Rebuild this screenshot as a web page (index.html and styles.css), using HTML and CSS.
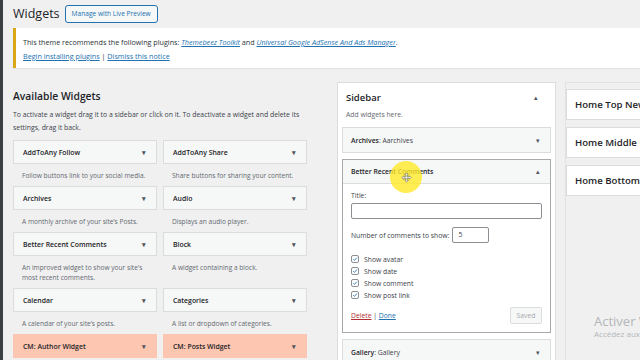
FILE: index.html
```html
<!DOCTYPE html>
<html lang="en">
<head>
  <meta charset="UTF-8">
  <title>Widgets</title>
  <link rel="stylesheet" href="styles.css">
</head>
<body>
<div class="page">
  <div class="header">
    <h1>Widgets</h1>
    <a class="preview-btn" href="#">Manage with Live Preview</a>
  </div>

  <div class="notice">
    <p>This theme recommends the following plugins: <a href="#"><em>Themebeez Toolkit</em></a> and <a href="#"><em>Universal Google AdSense And Ads Manager</em></a>.</p>
    <p><a href="#">Begin installing plugins</a> | <a href="#">Dismiss this notice</a></p>
  </div>

  <div class="main">
    <div class="available">
      <h2>Available Widgets</h2>
      <p class="intro">To activate a widget drag it to a sidebar or click on it. To deactivate a widget and delete its settings, drag it back.</p>
      <div class="widget-grid">
        <div class="widget">
          <div class="widget-top"><span>AddToAny Follow</span><span class="arrow">▾</span></div>
          <div class="widget-desc">Follow buttons link to your social media.</div>
        </div>
        <div class="widget">
          <div class="widget-top"><span>AddToAny Share</span><span class="arrow">▾</span></div>
          <div class="widget-desc">Share buttons for sharing your content.</div>
        </div>
        <div class="widget">
          <div class="widget-top"><span>Archives</span><span class="arrow">▾</span></div>
          <div class="widget-desc">A monthly archive of your site’s Posts.</div>
        </div>
        <div class="widget">
          <div class="widget-top"><span>Audio</span><span class="arrow">▾</span></div>
          <div class="widget-desc">Displays an audio player.</div>
        </div>
        <div class="widget">
          <div class="widget-top"><span>Better Recent Comments</span><span class="arrow">▾</span></div>
          <div class="widget-desc">An improved widget to show your site's<br>most recent comments.</div>
        </div>
        <div class="widget">
          <div class="widget-top"><span>Block</span><span class="arrow">▾</span></div>
          <div class="widget-desc">A widget containing a block.</div>
        </div>
        <div class="widget">
          <div class="widget-top"><span>Calendar</span><span class="arrow">▾</span></div>
          <div class="widget-desc">A calendar of your site’s posts.</div>
        </div>
        <div class="widget">
          <div class="widget-top"><span>Categories</span><span class="arrow">▾</span></div>
          <div class="widget-desc">A list or dropdown of categories.</div>
        </div>
        <div class="widget highlight">
          <div class="widget-top"><span>CM: Author Widget</span><span class="arrow">▾</span></div>
        </div>
        <div class="widget highlight">
          <div class="widget-top"><span>CM: Posts Widget</span><span class="arrow">▾</span></div>
        </div>
      </div>
    </div>

    <div class="sidebar">
      <div class="sidebar-head">
        <h2>Sidebar</h2>
        <span class="arrow">▴</span>
      </div>
      <p class="sidebar-desc">Add widgets here.</p>
      <div class="sidebar-widgets">
        <div class="s-widget">
          <div class="s-widget-top"><span><b>Archives</b>: Aarchives</span><span class="arrow">▾</span></div>
        </div>
        <div class="s-widget open">
          <div class="s-widget-top"><span><b>Better Recent Comments</b></span><span class="arrow">▴</span></div>
          <div class="s-widget-form">
            <label class="field-label">Title:</label>
            <div class="text-input wide"></div>
            <div class="num-row">
              <span>Number of comments to show:</span>
              <div class="text-input num">5</div>
            </div>
            <ul class="checks">
              <li><span class="box"><svg viewBox="0 0 10 10"><path d="M2 5.2 L4.2 7.4 L8.2 2.6" fill="none" stroke="#2271b1" stroke-width="1.4"/></svg></span>Show avatar</li>
              <li><span class="box"><svg viewBox="0 0 10 10"><path d="M2 5.2 L4.2 7.4 L8.2 2.6" fill="none" stroke="#2271b1" stroke-width="1.4"/></svg></span>Show date</li>
              <li><span class="box"><svg viewBox="0 0 10 10"><path d="M2 5.2 L4.2 7.4 L8.2 2.6" fill="none" stroke="#2271b1" stroke-width="1.4"/></svg></span>Show comment</li>
              <li><span class="box"><svg viewBox="0 0 10 10"><path d="M2 5.2 L4.2 7.4 L8.2 2.6" fill="none" stroke="#2271b1" stroke-width="1.4"/></svg></span>Show post link</li>
            </ul>
            <div class="form-actions">
              <span><a class="delete" href="#">Delete</a> | <a href="#">Done</a></span>
              <span class="saved-btn">Saved</span>
            </div>
          </div>
        </div>
        <div class="s-widget">
          <div class="s-widget-top"><span><b>Gallery</b>: Gallery</span><span class="arrow">▾</span></div>
        </div>
      </div>
    </div>

    <div class="areas">
      <div class="area">Home Top News</div>
      <div class="area">Home Middle News</div>
      <div class="area">Home Bottom News</div>
    </div>
  </div>
</div>

<!-- recording highlight around the mouse pointer -->
<div class="cursor-dot">
  <svg class="move-cursor" viewBox="0 0 12 12"><path d="M6 1 L8 3 H6.7 V5.3 H9 V4 L11 6 L9 8 V6.7 H6.7 V9 H8 L6 11 L4 9 H5.3 V6.7 H3 V8 L1 6 L3 4 V5.3 H5.3 V3 H4 Z" fill="#fff" stroke="#555" stroke-width="0.6"/></svg>
</div>
<div class="watermark">
  <div class="wm-big">Activer Windows</div>
  <div class="wm-small">Accédez aux paramètres pour activer Windows.</div>
</div>
</body>
</html>
```

FILE: styles.css
```css
* {
  box-sizing: border-box;
}

html, body {
  margin: 0;
  height: 100%;
  overflow: hidden;
}

body {
  background: #f0f0f1;
  font-family: "Open Sans", sans-serif;
  color: #3c434a;
  font-size: 6.8px;
  border-left: 3px solid #3a3f44;
}

a {
  color: #2271b1;
}

.page {
  padding-left: 10px;
  width: 700px;
}

.header {
  display: flex;
  align-items: center;
  gap: 5px;
  height: 28px;
  padding-bottom: 1px;
}

.header h1 {
  margin: 0;
  font-size: 12.5px;
  font-weight: 400;
  color: #1d2327;
}

.preview-btn {
  border: 1px solid #2271b1;
  border-radius: 3px;
  background: #f6f7f7;
  font-size: 6.6px;
  text-decoration: none;
  padding: 3px 6px;
  line-height: 10px;
}

.notice {
  background: #fff;
  border-left: 3px solid #dba617;
  box-shadow: 0 1px 1px rgba(0,0,0,0.05);
  height: 40px;
  padding: 9px 7px 0;
  color: #2c3338;
  font-size: 7.2px;
}

.notice p {
  margin: 0 0 4px;
  line-height: 10px;
}

.main {
  display: flex;
  margin-top: 14px;
}

.available {
  width: 293px;
}

.available h2 {
  margin: 0;
  font-size: 10.3px;
  font-weight: 600;
  color: #1d2327;
  line-height: 16px;
  margin-top: 6px;
}

.intro {
  margin: 4px 0 6px;
  line-height: 13px;
  font-size: 6.9px;
}

.widget-grid {
  display: grid;
  grid-template-columns: 144px 144px;
  column-gap: 6px;
}

.widget-top {
  display: flex;
  justify-content: space-between;
  align-items: center;
  height: 24px;
  padding: 0 10px 0 9px;
  background: #f6f7f7;
  border: 1px solid #dcdcde;
  font-weight: 600;
  color: #1d2327;
  font-size: 6.9px;
}

.widget.highlight .widget-top {
  background: #fdc6b0;
  border-color: #fdc6b0;
}

.arrow {
  font-size: 7px;
  color: #50575e;
}

.widget-desc {
  padding: 7px 0 5px 9px;
  line-height: 10px;
  color: #646970;
  font-size: 6.6px;
  white-space: nowrap;
}

.sidebar {
  margin-left: 31px;
  width: 219px;
  height: 290px;
  background: #fff;
  border: 1px solid #dcdcde;
  padding: 0 4px;
}

.sidebar-head {
  display: flex;
  justify-content: space-between;
  align-items: center;
  padding: 8px 13px 0 4px;
}

.sidebar-head h2 {
  margin: 0;
  font-size: 9.5px;
  font-weight: 600;
  color: #1d2327;
}

.sidebar-desc {
  margin: 6px 0 8px 4px;
  color: #646970;
}

.sidebar-widgets {
  display: flex;
  flex-direction: column;
  gap: 6px;
}

.s-widget {
  border: 1px solid #dcdcde;
  background: #f6f7f7;
}

.s-widget-top {
  display: flex;
  justify-content: space-between;
  align-items: center;
  height: 24px;
  padding: 0 10px 0 8px;
  color: #3c434a;
}

.s-widget-top b {
  font-weight: 600;
  color: #1d2327;
}

.s-widget.open {
  border-color: #a7aaad;
}

.s-widget.open .s-widget-top {
  border-bottom: 1px solid #dcdcde;
}

.s-widget-form {
  background: #fff;
  padding: 7px 8px 8px;
  height: 148px;
}

.field-label {
  display: block;
  line-height: 10px;
  margin-bottom: 2px;
}

.text-input {
  border: 1px solid #8c8f94;
  border-radius: 2px;
  height: 16px;
  background: #fff;
  padding: 2px 5px;
  line-height: 10px;
}

.text-input.wide {
  width: 191px;
}

.num-row {
  display: flex;
  align-items: center;
  gap: 3px;
  margin-top: 8px;
}

.text-input.num {
  width: 37px;
}

.checks {
  list-style: none;
  margin: 10px 0 0;
  padding: 0;
}

.checks li {
  display: flex;
  align-items: center;
  gap: 5px;
  height: 12px;
}

.box {
  width: 8px;
  height: 8px;
  border: 1px solid #8c8f94;
  border-radius: 2px;
  display: flex;
}

.box svg {
  width: 100%;
  height: 100%;
}

.form-actions {
  display: flex;
  justify-content: space-between;
  align-items: center;
  margin-top: 6px;
}

.delete {
  color: #b32d2e;
}

.saved-btn {
  border: 1px solid #dcdcde;
  background: #f6f7f7;
  color: #a7aaad;
  border-radius: 2px;
  width: 32px;
  height: 17px;
  display: flex;
  align-items: center;
  justify-content: center;
}

.areas {
  margin-left: 9px;
  flex: 1;
  border-top: 1px solid #e2e2e4;
  border-left: 1px solid #e2e2e4;
  padding-top: 6px;
  display: flex;
  flex-direction: column;
  gap: 7px;
}

.area {
  background: #fff;
  border: 1px solid #dcdcde;
  height: 31px;
  padding: 0 8px;
  display: flex;
  align-items: center;
  font-size: 9.6px;
  font-weight: 600;
  color: #1d2327;
  white-space: nowrap;
}

.cursor-dot {
  position: absolute;
  left: 390px;
  top: 161px;
  width: 32px;
  height: 32px;
  border-radius: 50%;
  background: rgba(255, 232, 40, 0.8);
  display: flex;
  align-items: center;
  justify-content: center;
}

.move-cursor {
  width: 11px;
  height: 11px;
}

.watermark {
  position: absolute;
  left: 594px;
  top: 313px;
  color: #b4b6b8;
  white-space: nowrap;
}

.wm-big {
  font-size: 13px;
  line-height: 16px;
}

.wm-small {
  font-size: 8px;
  line-height: 10px;
}
```
